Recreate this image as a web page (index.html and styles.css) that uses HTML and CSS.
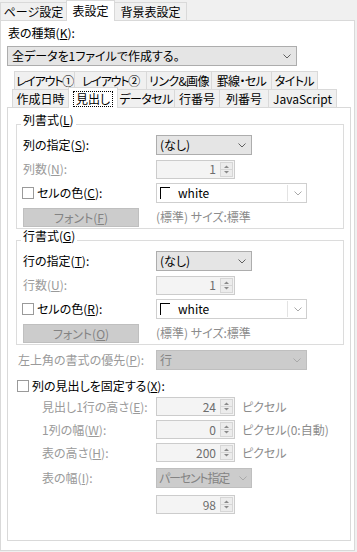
FILE: index.html
```html
<!DOCTYPE html>
<html lang="ja">
  <head>
    <meta charset="utf-8" />
    <title>表設定</title>
    <link rel="stylesheet" href="styles.css">
  </head>

  <body>
    <div class="dialog">
      <div class="tabs">
        <div class="tab">ページ設定</div>
        <div class="tab active">表設定</div>
        <div class="tab">背景表設定</div>
      </div>

      <div class="page">
        <div class="kind-label">表の種類(<u>K</u>):</div>
        <div class="combo kind">
          <span>全データを1ファイルで作成する。</span>
          <svg class="chev" width="8" height="5" viewBox="0 0 8 5"><path d="M0.5 0.5L4 4L7.5 0.5" /></svg>
        </div>

        <div class="subtabs">
          <div class="tab-row back">
            <div class="subtab tight">レイアウト①</div>
            <div class="subtab tight">レイアウト②</div>
            <div class="subtab narrow">リンク&amp;画像</div>
            <div class="subtab narrow">罫線・セル</div>
            <div class="subtab narrow">タイトル</div>
          </div>
          <div class="tab-row front">
            <div class="subtab">作成日時</div>
            <div class="subtab active"><span class="focus">見出し</span></div>
            <div class="subtab narrow">データセル</div>
            <div class="subtab">行番号</div>
            <div class="subtab">列番号</div>
            <div class="subtab">JavaScript</div>
          </div>
        </div>

        <div class="subpage">
          <!-- 列書式 -->
          <div class="group first">
            <div class="group-title">列書式(<u>L</u>)</div>
            <div class="rows">
              <div class="row">
                <div class="lbl">列の指定(<u>S</u>):</div>
                <div class="combo mid">
                  <span>(なし)</span>
                  <svg class="chev" width="8" height="5" viewBox="0 0 8 5"><path d="M0.5 0.5L4 4L7.5 0.5" /></svg>
                </div>
              </div>
              <div class="row">
                <div class="lbl gray">列数(<u>N</u>):</div>
                <div class="spin">
                  <span class="val">1</span>
                  <svg class="arrows" width="13" height="15" viewBox="0 0 13 15"><rect x="0.5" y="0.5" width="12" height="14" /><line x1="1" y1="7.5" x2="12" y2="7.5" /><path d="M4 6h5L6.5 3.5z" /><path d="M4 9h5l-2.5 2.5z" /></svg>
                </div>
              </div>
              <div class="row">
                <div class="lbl check-lbl"><span class="checkbox"></span>セルの色(<u>C</u>):</div>
                <div class="color">
                  <span class="swatch"></span>
                  <span>white</span>
                  <span class="sep"></span>
                  <svg class="chev light" width="8" height="5" viewBox="0 0 8 5"><path d="M0.5 0.5L4 4L7.5 0.5" /></svg>
                </div>
              </div>
              <div class="row">
                <div class="lbl"><div class="btn">フォント(<u>F</u>)</div></div>
                <div class="info">(標準) サイズ:標準</div>
              </div>
            </div>
          </div>

          <!-- 行書式 -->
          <div class="group second">
            <div class="group-title">行書式(<u>G</u>)</div>
            <div class="rows">
              <div class="row">
                <div class="lbl">行の指定(<u>T</u>):</div>
                <div class="combo mid">
                  <span>(なし)</span>
                  <svg class="chev" width="8" height="5" viewBox="0 0 8 5"><path d="M0.5 0.5L4 4L7.5 0.5" /></svg>
                </div>
              </div>
              <div class="row">
                <div class="lbl gray">行数(<u>U</u>):</div>
                <div class="spin">
                  <span class="val">1</span>
                  <svg class="arrows" width="13" height="15" viewBox="0 0 13 15"><rect x="0.5" y="0.5" width="12" height="14" /><line x1="1" y1="7.5" x2="12" y2="7.5" /><path d="M4 6h5L6.5 3.5z" /><path d="M4 9h5l-2.5 2.5z" /></svg>
                </div>
              </div>
              <div class="row">
                <div class="lbl check-lbl"><span class="checkbox"></span>セルの色(<u>R</u>):</div>
                <div class="color">
                  <span class="swatch"></span>
                  <span>white</span>
                  <span class="sep"></span>
                  <svg class="chev light" width="8" height="5" viewBox="0 0 8 5"><path d="M0.5 0.5L4 4L7.5 0.5" /></svg>
                </div>
              </div>
              <div class="row">
                <div class="lbl"><div class="btn">フォント(<u>O</u>)</div></div>
                <div class="info">(標準) サイズ:標準</div>
              </div>
            </div>
          </div>

          <div class="row opt">
            <div class="lbl gray">左上角の書式の優先(<u>P</u>):</div>
            <div class="combo disabled long">
              <span>行</span>
              <svg class="chev" width="8" height="5" viewBox="0 0 8 5"><path d="M0.5 0.5L4 4L7.5 0.5" /></svg>
            </div>
          </div>

          <div class="fix-row"><span class="checkbox"></span>列の見出しを固定する(<u>X</u>):</div>

          <div class="row sub">
            <div class="lbl gray">見出し1行の高さ(<u>E</u>):</div>
            <div class="spin">
              <span class="val">24</span>
              <svg class="arrows" width="13" height="15" viewBox="0 0 13 15"><rect x="0.5" y="0.5" width="12" height="14" /><line x1="1" y1="7.5" x2="12" y2="7.5" /><path d="M4 6h5L6.5 3.5z" /><path d="M4 9h5l-2.5 2.5z" /></svg>
            </div>
            <div class="unit">ピクセル</div>
          </div>
          <div class="row sub">
            <div class="lbl gray">1列の幅(<u>W</u>):</div>
            <div class="spin">
              <span class="val">0</span>
              <svg class="arrows" width="13" height="15" viewBox="0 0 13 15"><rect x="0.5" y="0.5" width="12" height="14" /><line x1="1" y1="7.5" x2="12" y2="7.5" /><path d="M4 6h5L6.5 3.5z" /><path d="M4 9h5l-2.5 2.5z" /></svg>
            </div>
            <div class="unit">ピクセル(0:自動)</div>
          </div>
          <div class="row sub">
            <div class="lbl gray">表の高さ(<u>H</u>):</div>
            <div class="spin">
              <span class="val">200</span>
              <svg class="arrows" width="13" height="15" viewBox="0 0 13 15"><rect x="0.5" y="0.5" width="12" height="14" /><line x1="1" y1="7.5" x2="12" y2="7.5" /><path d="M4 6h5L6.5 3.5z" /><path d="M4 9h5l-2.5 2.5z" /></svg>
            </div>
            <div class="unit">ピクセル</div>
          </div>
          <div class="row sub width-row">
            <div class="lbl gray">表の幅(<u>I</u>):</div>
            <div class="combo disabled mid pct">
              <span class="tight">パーセント指定</span>
              <svg class="chev" width="8" height="5" viewBox="0 0 8 5"><path d="M0.5 0.5L4 4L7.5 0.5" /></svg>
            </div>
          </div>
          <div class="row sub last-row">
            <div class="lbl"></div>
            <div class="spin">
              <span class="val">98</span>
              <svg class="arrows" width="13" height="15" viewBox="0 0 13 15"><rect x="0.5" y="0.5" width="12" height="14" /><line x1="1" y1="7.5" x2="12" y2="7.5" /><path d="M4 6h5L6.5 3.5z" /><path d="M4 9h5l-2.5 2.5z" /></svg>
            </div>
          </div>
        </div>
      </div>
    </div>
  </body>
</html>
```

FILE: styles.css
```css
* {
  box-sizing: border-box;
}
body, html {
  margin: 0;
  padding: 0;
}
body {
  background: #f0f0f0;
  font-family: "Noto Sans CJK JP", "Noto Sans", sans-serif;
  font-size: 12px;
  line-height: 16px;
  color: #000;
  font-feature-settings: "palt";
}
u {
  text-underline-offset: 1px;
}
.narrow {
  letter-spacing: -0.6px;
}
.tight {
  letter-spacing: -1.2px;
}
.dialog {
  width: 357px;
  height: 552px;
}

/* top tabs */
.tabs {
  display: flex;
  align-items: flex-end;
  height: 20px;
}
.tab {
  height: 18px;
  line-height: 17px;
  border: 1px solid #d9d9d9;
  border-bottom: 0;
  border-left: 0;
  background: #f0f0f0;
  text-align: center;
}
.tab:first-child {
  border-left: 1px solid #d9d9d9;
}
.tab:nth-child(1) { width: 67px; }
.tab:nth-child(2) { width: 49px; margin-left: -1px; }
.tab:nth-child(3) { width: 72px; }
.tab.active {
  height: 21px;
  margin-bottom: -1px;
  padding-top: 1px;
  border-left: 1px solid #d9d9d9;
  background: #fff;
  position: relative;
  z-index: 1;
}

.page {
  width: 355px;
  height: 531px;
  border: 1px solid #d9d9d9;
  background: #fff;
  padding: 4px 2px 0 6px;
}
.kind-label {
  margin-left: 1px;
}

/* combo boxes */
.combo {
  height: 20px;
  border: 1px solid #adadad;
  background: #e5e5e5;
  display: flex;
  align-items: center;
  justify-content: space-between;
  padding: 0 5px 0 3px;
  white-space: nowrap;
}
.combo.kind {
  width: 290px;
  margin-top: 5px;
  padding-left: 4px;
}
.combo.mid {
  width: 96px;
}
.combo.long {
  width: 151px;
}
.combo.pct {
  padding: 0 4px 0 2px;
}
.combo.disabled {
  background: #cccccc;
  border-color: #bfbfbf;
  color: #838383;
}
.chev {
  flex: none;
}
.chev path {
  fill: none;
  stroke: #606060;
  stroke-width: 1;
}
.combo.disabled .chev path,
.chev.light path {
  stroke: #a9a9a9;
}

/* inner tabs */
.subtabs {
  margin-top: 5px;
}
.tab-row {
  display: flex;
  height: 18px;
}
.tab-row.back {
  margin-left: 7px;
}
.tab-row.front {
  margin-left: 5px;
}
.subtab {
  height: 18px;
  line-height: 17px;
  border: 1px solid #d9d9d9;
  border-bottom: 0;
  border-left: 0;
  background: #f0f0f0;
  text-align: center;
  white-space: nowrap;
  overflow: hidden;
}
.subtab:first-child {
  border-left: 1px solid #d9d9d9;
}
.back .subtab:nth-child(1) { width: 61px; }
.back .subtab:nth-child(2) { width: 72px; }
.back .subtab:nth-child(3) { width: 65px; }
.back .subtab:nth-child(4) { width: 60px; }
.back .subtab:nth-child(5) { width: 46px; }
.front .subtab:nth-child(1) { width: 57px; }
.front .subtab:nth-child(2) { width: 50px; margin-left: -1px; }
.front .subtab:nth-child(3) { width: 57px; }
.front .subtab:nth-child(4) { width: 45px; }
.front .subtab:nth-child(5) { width: 49px; }
.front .subtab:nth-child(6) { width: 68px; }
.subtab.active {
  height: 21px;
  margin-top: -2px;
  padding-top: 2px;
  border-left: 1px solid #d9d9d9;
  background: #fff;
  position: relative;
  z-index: 1;
  overflow: visible;
}
.focus {
  display: inline-block;
  border: 1px dotted #000;
  line-height: 14px;
  padding: 0 2px;
}

.subpage {
  width: 344px;
  height: 434px;
  border: 1px solid #d9d9d9;
  padding: 0 6px 0 8px;
}

/* group boxes */
.group {
  border: 1px solid #dcdcdc;
  padding: 0 6px 1px 6px;
}
.group.first {
  margin-top: 16px;
}
.group.second {
  margin-top: 11px;
}
.group-title {
  width: max-content;
  margin: -12px 0 0 -2px;
  padding: 0 2px;
  line-height: 14px;
  background: #fff;
}
.rows {
  display: flex;
  flex-direction: column;
  gap: 4px;
  margin-top: 8px;
}
.row {
  display: flex;
  align-items: center;
  height: 20px;
  white-space: nowrap;
}
.lbl {
  width: 133px;
  flex: none;
}
.gray {
  color: #9a9a9a;
}
.check-lbl {
  display: flex;
  align-items: center;
  margin-left: -1px;
  width: 134px;
}
.checkbox {
  display: inline-block;
  width: 12px;
  height: 12px;
  border: 1px solid #9a9a9a;
  background: #fff;
  margin-right: 3px;
}

/* spinner */
.spin {
  width: 79px;
  height: 19px;
  border: 1px solid #cccccc;
  background: #f4f4f4;
  display: flex;
  align-items: center;
  justify-content: flex-end;
  padding-right: 1px;
  flex: none;
}
.spin .val {
  color: #6d6d6d;
  padding-right: 4px;
}
.arrows rect {
  fill: #ececec;
  stroke: #d6d6d6;
}
.arrows line {
  stroke: #d6d6d6;
}
.arrows path {
  fill: #8a8a8a;
}

/* colour picker */
.color {
  width: 151px;
  height: 20px;
  border: 1px solid #cfcfcf;
  background: #fff;
  display: flex;
  align-items: center;
}
.swatch {
  width: 10px;
  height: 12px;
  border-top: 1px solid #000;
  border-left: 1px solid #000;
  margin: 0 8px 0 3px;
}
.sep {
  width: 1px;
  height: 16px;
  background: #e3e3e3;
  margin-left: auto;
  margin-right: 6px;
}
.color .chev {
  margin-right: 4px;
}

.btn {
  width: 116px;
  height: 19px;
  border: 1px solid #bfbfbf;
  background: #cccccc;
  color: #838383;
  text-align: center;
  line-height: 17px;
}
.info {
  color: #8c8c8c;
}

/* rows below the groups */
.row.opt {
  margin-top: 5px;
}
.row.opt .lbl {
  width: 138px;
  margin-left: 2px;
}
.fix-row {
  display: flex;
  align-items: center;
  height: 16px;
  margin: 8px 0 0 1px;
}
.row.sub {
  height: 19px;
  margin-top: 4px;
}
.fix-row + .row.sub {
  margin-top: 3px;
}
.row.sub .lbl {
  width: 114px;
  margin-left: 26px;
}
.row.sub.width-row {
  height: 20px;
  margin-top: 6px;
}
.row.sub.last-row {
  margin-top: 7px;
}
.unit {
  color: #8c8c8c;
  margin-left: 7px;
}
```
